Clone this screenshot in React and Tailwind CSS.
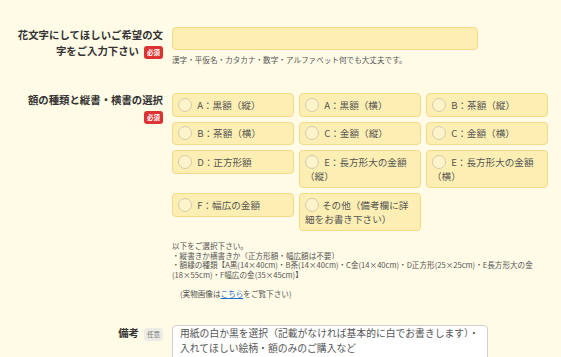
const options = [
  { id: 'a-tate', label: 'A：黒額（縦）' },
  { id: 'a-yoko', label: 'A：黒額（横）' },
  { id: 'b-tate', label: 'B：茶額（縦）' },
  { id: 'b-yoko', label: 'B：茶額（横）' },
  { id: 'c-tate', label: 'C：金額（縦）' },
  { id: 'c-yoko', label: 'C：金額（横）' },
  { id: 'd', label: 'D：正方形額' },
  { id: 'e-tate', label: 'E：長方形大の金額（縦）' },
  { id: 'e-yoko', label: 'E：長方形大の金額（横）' },
  { id: 'f', label: 'F：幅広の金額' },
  { id: 'other', label: 'その他（備考欄に詳細をお書き下さい）', tight: true },
]

function Required() {
  return (
    <span className="ml-[5px] inline-block h-[13px] w-[19px] rounded-[3px] bg-[#dc3232] text-center align-middle text-[6.5px] leading-[13px] font-bold text-white">
      必須
    </span>
  )
}

function Optional() {
  return (
    <span className="ml-[5px] inline-block h-[13px] w-[19px] rounded-[3px] bg-[#ecebe4] text-center align-middle text-[6.5px] leading-[13px] font-normal text-[#777]">
      任意
    </span>
  )
}

function FieldLabel({ children }) {
  return (
    <div className="w-[163px] shrink-0 pl-[13px] text-right text-[10.4px] leading-[16px] font-bold text-[#333]">
      {children}
    </div>
  )
}

function Option({ option }) {
  return (
    <label className="block rounded-[4px] border border-[#f3da86] bg-[#fdefb3] py-[3.5px] pr-[6px] pl-[5px] text-[9.6px] leading-[14.5px] text-[#555]">
      <span className="mr-[3px] inline-block h-[14px] w-[14px] rounded-full border border-[#d3cbab] bg-[#fdf4cc] align-top" />
      {option.tight ? option.label : ' ' + option.label}
    </label>
  )
}

export default function App() {
  return (
    <div className="min-h-[357px] bg-[#fffbe6] pt-[27px] font-['Noto_Sans_CJK_JP','Noto_Sans',sans-serif]">
      <div className="flex gap-[9px]">
        <FieldLabel>
          花文字にしてほしいご希望の文字をご入力下さい
          <Required />
        </FieldLabel>
        <div>
          <input type="text" className="block h-[23px] w-[306px] rounded-[4px] border border-[#f3da86] bg-[#fdefb3] outline-none" />
          <div className="mt-[4px] text-[7.6px] leading-[11px] text-[#555]">
            漢字・平仮名・カタカナ・数字・アルファベット何でも大丈夫です。
          </div>
        </div>
      </div>

      <div className="mt-[27px] flex gap-[9px]">
        <FieldLabel>
          額の種類と縦書・横書の選択
          <Required />
        </FieldLabel>
        <div className="w-[376px] pt-px">
          <div className="grid grid-cols-3 items-start gap-x-[5px] gap-y-[5px]">
            {options.map((option) => (
              <Option key={option.id} option={option} />
            ))}
          </div>
          <div className="mt-[10px] text-[7.6px] leading-[9.5px] text-[#555]">
            <div>以下をご選択下さい。</div>
            <div>・縦書きか横書きか（正方形額・幅広額は不要）</div>
            <div>・額縁の種類【A黒(14×40cm)・B茶(14×40cm)・C金(14×40cm)・D正方形(25×25cm)・E長方形大の金(18×55cm)・F幅広の金(35×45cm)】</div>
            <div className="h-[9.5px]" />
            <div className="pl-[8px]">
              (実物画像は<a href="#" className="text-[#1f6fd0] underline">こちら</a>をご覧下さい)
            </div>
          </div>
        </div>
      </div>

      <div className="mt-[27px] flex gap-[9px]">
        <FieldLabel>
          備考
          <Optional />
        </FieldLabel>
        <textarea
          className="block h-[48px] w-[316px] resize-none rounded-[4px] border border-[#cfcfcf] bg-white pt-0 pr-[4px] pl-[7px] text-[9.8px] leading-[15px] text-[#555] outline-none placeholder:text-[#555]"
          placeholder={'用紙の白か黒を選択（記載がなければ基本的に白でお書きします）・\n入れてほしい絵柄・額のみのご購入など'}
        />
      </div>
    </div>
  )
}
